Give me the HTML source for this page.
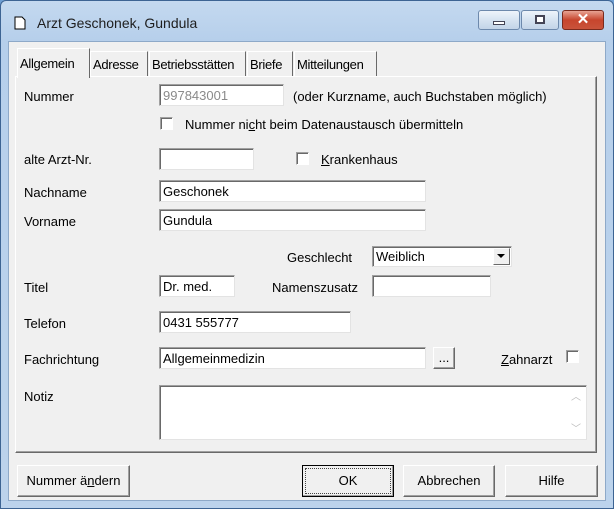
<!DOCTYPE html>
<html><head><style>
*{box-sizing:border-box;margin:0;padding:0}
body{width:614px;height:509px;overflow:hidden;background:#6e9fd3;font-family:"Liberation Sans",sans-serif;font-size:13px;color:#000;position:relative}
.frame{position:absolute;left:0;top:0;width:614px;height:509px;background:linear-gradient(#c4d9ef,#b6cfeb 40px,#bcd3ec);border:1px solid #3d6493;border-radius:6px 6px 0 0}
.client{position:absolute;left:8px;top:41px;width:598px;height:460px;background:#f0f0f0;border:1px solid #8ea9c8}
.a{position:absolute}
.in{position:absolute;background:#fff;border:1px solid;border-color:#a0a0a0 #e3e3e3 #e3e3e3 #a0a0a0;box-shadow:inset 1px 1px 0 #696969;padding:3px 0 0 3px;height:22px;white-space:nowrap}
.lb{position:absolute;white-space:nowrap}
.cb{position:absolute;width:13px;height:13px;background:#fff;border:1px solid;border-color:#a0a0a0 #fff #fff #a0a0a0;box-shadow:inset 1px 1px 0 #696969}
.btn{position:absolute;background:#f0f0f0;border:1px solid;border-color:#fff #696969 #696969 #fff;box-shadow:inset -1px -1px 0 #a0a0a0;text-align:center;line-height:29px;height:32px}
.tab{position:absolute;top:51px;height:25px;border:1px solid;border-color:#fff #696969 transparent #fff;border-bottom:none;padding:5px 2px 0 2px;background:#f0f0f0;white-space:nowrap;letter-spacing:-0.3px}
.wb{position:absolute;top:10px;height:20px;border:1px solid #6d89ac;border-radius:3px;background:linear-gradient(#eef4fb,#d6e3f1 50%,#c3d4e8)}
</style></head><body>
<div class="frame"></div>
<svg class="a" style="left:14px;top:16px" width="12" height="14"><path d="M1 1H8L11 4V13H1Z" fill="#fff" stroke="#000"/></svg>
<div class="lb" style="left:37px;top:15px;font-size:14px;color:#1e1e1e">Arzt Geschonek, Gundula</div>
<div class="wb" style="left:478px;width:42px"><div class="a" style="left:14px;top:10px;width:12px;height:4px;background:#fff;border:1px solid #445"></div></div>
<div class="wb" style="left:521px;width:38px"><div class="a" style="left:13px;top:4px;width:10px;height:9px;border:2px solid #445;background:#fff"></div></div>
<div class="a" style="left:562px;top:10px;width:42px;height:20px;border:1px solid #7a2a1d;border-radius:3px;background:linear-gradient(#e8a393,#c7452d 50%,#c9533b);color:#fff;font-weight:bold;font-size:15px;text-align:center;line-height:18px">✕</div>
<div class="client"></div>
<div class="a" style="left:15px;top:76px;width:582px;height:377px;border:1px solid;border-color:#fff #696969 #696969 #fff;box-shadow:inset -1px -1px 0 #a0a0a0"></div>
<div class="tab" style="left:90px;width:58px">Adresse</div>
<div class="tab" style="left:149px;width:97px">Betriebsstätten</div>
<div class="tab" style="left:247px;width:46px">Briefe</div>
<div class="tab" style="left:294px;width:83px">Mitteilungen</div>
<div class="tab" style="left:17px;top:48px;width:73px;height:30px;padding-top:7px;z-index:2">Allgemein</div>
<div class="lb" style="left:24px;top:89px">Nummer</div>
<div class="in" style="left:159px;top:84px;width:125px;color:#8a8a8a">997843001</div>
<div class="lb" style="left:293px;top:89px">(oder Kurzname, auch Buchstaben möglich)</div>
<div class="cb" style="left:160px;top:117px"></div>
<div class="lb" style="left:185px;top:117px">Nummer ni<u>c</u>ht beim Datenaustausch übermitteln</div>
<div class="lb" style="left:24px;top:152px">alte Arzt-Nr.</div>
<div class="in" style="left:159px;top:148px;width:95px"></div>
<div class="cb" style="left:296px;top:152px"></div>
<div class="lb" style="left:321px;top:152px"><u>K</u>rankenhaus</div>
<div class="lb" style="left:24px;top:185px">Nachname</div>
<div class="in" style="left:159px;top:180px;width:267px">Geschonek</div>
<div class="lb" style="left:24px;top:214px">Vorname</div>
<div class="in" style="left:159px;top:209px;width:267px">Gundula</div>
<div class="lb" style="left:287px;top:250px">Geschlecht</div>
<div class="in" style="left:372px;top:246px;width:140px;height:21px;padding-top:2px">Weiblich
<div class="a" style="right:1px;top:1px;width:17px;height:17px;background:#f0f0f0;border:1px solid;border-color:#fff #696969 #696969 #fff"><svg class="a" style="left:3px;top:5px" width="9" height="5"><path d="M0 0H8L4 4Z" fill="#000"/></svg></div></div>
<div class="lb" style="left:24px;top:280px">Titel</div>
<div class="in" style="left:159px;top:275px;width:76px">Dr. med.</div>
<div class="lb" style="left:272px;top:280px">Namenszusatz</div>
<div class="in" style="left:372px;top:275px;width:119px"></div>
<div class="lb" style="left:24px;top:316px">Telefon</div>
<div class="in" style="left:159px;top:311px;width:192px">0431 555777</div>
<div class="lb" style="left:24px;top:352px">Fachrichtung</div>
<div class="in" style="left:159px;top:347px;width:267px">Allgemeinmedizin</div>
<div class="btn" style="left:433px;top:347px;width:22px;height:22px;line-height:20px">...</div>
<div class="lb" style="left:501px;top:352px"><u>Z</u>ahnarzt</div>
<div class="cb" style="left:566px;top:350px"></div>
<div class="lb" style="left:24px;top:389px">Notiz</div>
<div class="in" style="left:159px;top:385px;width:428px;height:55px"><span class="a" style="right:5px;top:2px;color:#bbb;font-size:10px">︿</span><span class="a" style="right:5px;top:34px;color:#bbb;font-size:10px">﹀</span></div>
<div class="btn" style="left:17px;top:465px;width:113px">Nummer ä<u>n</u>dern</div>
<div class="btn" style="left:302px;top:465px;width:92px;border-color:#000;outline:1px dotted #444;outline-offset:-4px">OK</div>
<div class="btn" style="left:403px;top:465px;width:92px">Abbrechen</div>
<div class="btn" style="left:505px;top:465px;width:93px">Hilfe</div>
</body></html>
